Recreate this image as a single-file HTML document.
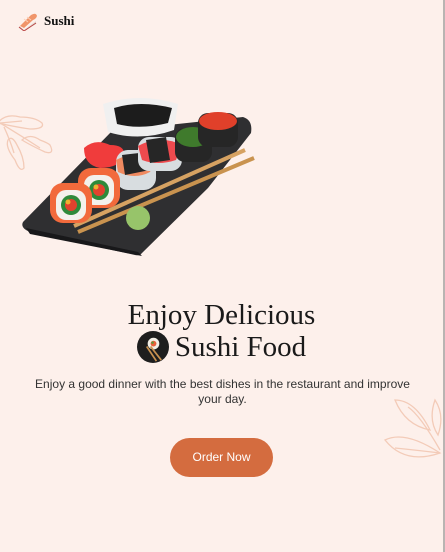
<!DOCTYPE html>
<html><head><meta charset="utf-8"><style>
html,body{margin:0;padding:0}
body{width:445px;height:552px;background:#fdf0eb;position:relative;overflow:hidden;font-family:"Liberation Sans",sans-serif}
.rb{position:absolute;right:0;top:0;width:2px;height:552px;background:#b9b4b2}
.logo{position:absolute;left:18px;top:11px;display:flex;align-items:center;gap:6px;font-family:"Liberation Serif",serif;font-weight:bold;font-size:13px;color:#111}
h1{position:absolute;left:0;width:443px;top:300px;margin:0;text-align:center;font-family:"Liberation Serif",serif;font-weight:normal;font-size:29px;line-height:31px;color:#1a1a1a}
p{position:absolute;left:30px;width:385px;top:377px;margin:0;text-align:center;font-size:12px;line-height:15px;color:#333}
.btn{position:absolute;left:170px;top:438px;width:103px;height:39px;border-radius:20px;background:#d46c3f;color:#fff;font-size:12px;line-height:39px;text-align:center}
</style></head><body>
<div class="rb"></div>
<div class="logo"><svg width="20" height="20" viewBox="0 0 20 20"><path d="M2 15 L13 4 Q18 1 19 5 Q18 8 15 9 L6 17 Z" fill="#f0956a"/><path d="M6 8 L10 11 M9 6 L13 9" stroke="#fbd0b8" stroke-width="1"/><path d="M1 15 L6 19 L18 10 L18 13 L6 20 L1 17Z" fill="#e3ddd4"/><path d="M1 16 L6 20 L18 12" stroke="#b44" stroke-width="1" fill="none"/></svg>Sushi</div>

<svg style="position:absolute;left:0;top:105px" width="60" height="80" viewBox="0 0 60 80" fill="none" stroke="#f3cbb8" stroke-width="1.3"><path d="M-2 18 Q5 8 20 12 Q35 12 42 18 Q45 24 30 24 Q15 22 -2 18Z"/><path d="M0 18 L22 16"/><path d="M0 18 Q20 30 40 43"/><path d="M22 35 Q30 28 40 35 Q48 38 50 40 Q55 50 45 47 Q30 40 22 35Z"/><path d="M8 35 Q12 30 17 40 Q24 52 24 63 Q20 68 15 55 Q5 42 8 35Z"/><path d="M4 22 Q10 35 14 48"/></svg>
<svg style="position:absolute;left:380px;top:395px" width="65" height="70" viewBox="0 0 65 70" fill="none" stroke="#f3cbb8" stroke-width="1.3"><path d="M15 5 Q35 5 50 35 Q25 30 15 5Z"/><path d="M28 12 Q40 20 60 55"/><path d="M55 5 Q65 20 58 40 Q48 25 55 5Z"/><path d="M5 45 Q25 35 60 58 Q25 70 5 45Z"/><path d="M15 53 Q35 55 60 58"/></svg>

<svg style="position:absolute;left:0;top:0" width="270" height="270" viewBox="0 0 270 270">
<path d="M23 222 L112 131 L243 117 Q253 120 251 133 L208 188 L142 253 Q140 256 135 255 L30 232 Q20 228 23 222Z" fill="#2f2f31"/>
<path d="M26 228 L138 252 L142 256 L30 234Z" fill="#18181a"/>
<path d="M103 104 Q140 92 178 104 L174 130 Q140 142 108 132Z" fill="#f0f0f0"/>
<path d="M114 108 Q140 100 172 108 L168 123 Q140 130 117 124Z" fill="#1c1c1c"/>
<path d="M84 148 Q95 138 110 145 Q125 145 124 155 Q120 168 100 168 Q84 165 84 148Z" fill="#f03c3c"/>
<rect x="116" y="150" width="40" height="40" rx="12" fill="#d8dde0"/><path d="M116 160 Q135 150 156 158 L150 172 Q135 180 118 172Z" fill="#f08a60"/><path d="M122 155 L148 152 L150 170 L125 175Z" fill="#262626"/>
<rect x="138" y="137" width="44" height="34" rx="11" fill="#d8dde0"/><path d="M138 146 Q160 134 182 145 L176 160 Q158 166 142 160Z" fill="#ee4a4e"/><path d="M146 140 L166 137 L170 160 L150 163Z" fill="#262626"/>
<rect x="175" y="128" width="37" height="34" rx="10" fill="#262626"/><ellipse cx="193" cy="137" rx="17" ry="10" fill="#3f7a2c"/>
<rect x="198" y="113" width="40" height="34" rx="10" fill="#262626"/><ellipse cx="218" cy="121" rx="19" ry="9" fill="#e0402a"/>
<line x1="78" y1="232" x2="254" y2="158" stroke="#c9934f" stroke-width="4"/>
<line x1="74" y1="226" x2="245" y2="150" stroke="#d6a262" stroke-width="4"/>
<rect x="78" y="168" width="42" height="40" rx="13" fill="#f26a3c"/><rect x="84" y="175" width="30" height="30" rx="10" fill="#f3f1ec"/><circle cx="99" cy="190" r="10" fill="#2e8a3a"/><circle cx="99" cy="190" r="6" fill="#e2422e"/><circle cx="96" cy="187" r="2.5" fill="#f0b030"/>
<rect x="50" y="183" width="42" height="40" rx="13" fill="#f26a3c"/><rect x="56" y="190" width="30" height="30" rx="10" fill="#f3f1ec"/><circle cx="71" cy="205" r="10" fill="#2e8a3a"/><circle cx="71" cy="205" r="6" fill="#e2422e"/><circle cx="68" cy="202" r="2.5" fill="#f0b030"/>
<ellipse cx="138" cy="218" rx="12" ry="12" fill="#97c46a"/>
</svg>

<h1>Enjoy Delicious<br><span style="display:inline-block;width:32px;height:32px;border-radius:50%;background:#1e1e1e;vertical-align:-7px;margin-right:6px;position:relative"><svg width="32" height="32" viewBox="0 0 33 33" style="position:absolute;left:0;top:0"><circle cx="17" cy="13" r="6" fill="#f3efe6"/><circle cx="17" cy="13" r="3" fill="#e8603a"/><circle cx="16" cy="12" r="1.3" fill="#5a9a3a"/><line x1="10" y1="16" x2="20" y2="31" stroke="#c9914f" stroke-width="1.8"/><line x1="14" y1="16" x2="25" y2="30" stroke="#c9914f" stroke-width="1.8"/></svg></span>Sushi Food</h1>
<p>Enjoy a good dinner with the best dishes in the restaurant and improve your day.</p>
<div class="btn">Order Now</div>
</body></html>
